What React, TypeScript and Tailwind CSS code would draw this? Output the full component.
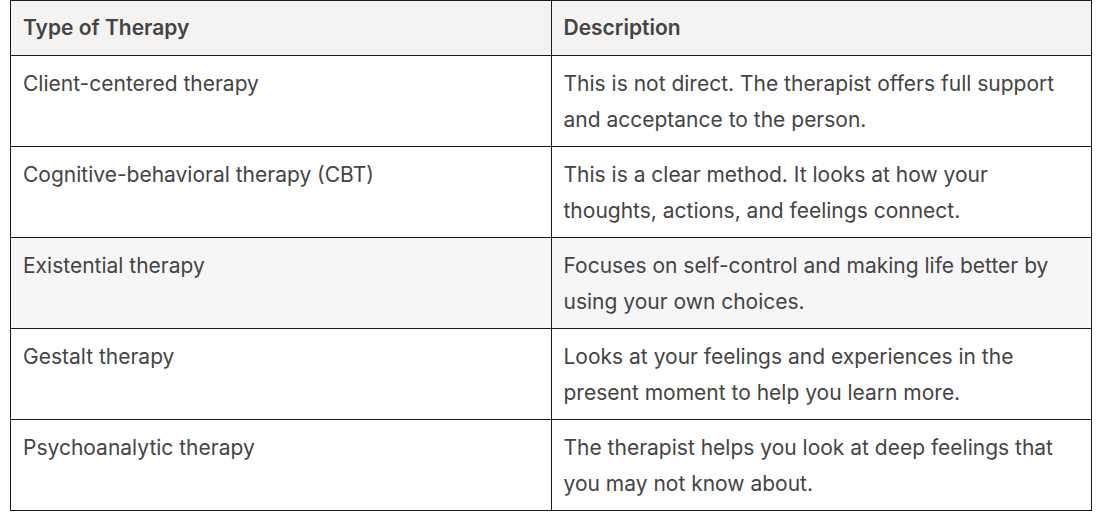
const rows: [string, string][] = [
  ['Client-centered therapy', 'This is not direct. The therapist offers full support and acceptance to the person.'],
  ['Cognitive-behavioral therapy (CBT)', 'This is a clear method. It looks at how your thoughts, actions, and feelings connect.'],
  ['Existential therapy', 'Focuses on self-control and making life better by using your own choices.'],
  ['Gestalt therapy', 'Looks at your feelings and experiences in the present moment to help you learn more.'],
  ['Psychoanalytic therapy', 'The therapist helps you look at deep feelings that you may not know about.'],
];

export default function App() {
  return (
    <div className="bg-white w-[1098px] h-[514px] pl-[10px] pr-[6px]" style={{ fontFamily: "Inter, 'Noto Sans', sans-serif" }}>
      <table className="w-full table-fixed border-collapse text-[21px] leading-[36px] text-[#444444]">
        <thead>
          <tr className="bg-[#f4f3f2]">
            <th className="border border-[#1a1a1a] text-left font-semibold px-3 pt-[9px] pb-[9px]">Type of Therapy</th>
            <th className="border border-[#1a1a1a] text-left font-semibold px-3 pt-[9px] pb-[9px]">Description</th>
          </tr>
        </thead>
        <tbody>
          {rows.map(([t, d], i) => (
            <tr key={t} className={i === 2 ? 'bg-[#f6f6f6]' : 'bg-white'}>
              <td className="border border-[#1a1a1a] align-top px-3 pt-[10px] pb-[8px]">{t}</td>
              <td className="border border-[#1a1a1a] align-top px-3 pt-[10px] pb-[8px]">{d}</td>
            </tr>
          ))}
        </tbody>
      </table>
    </div>
  );
}
